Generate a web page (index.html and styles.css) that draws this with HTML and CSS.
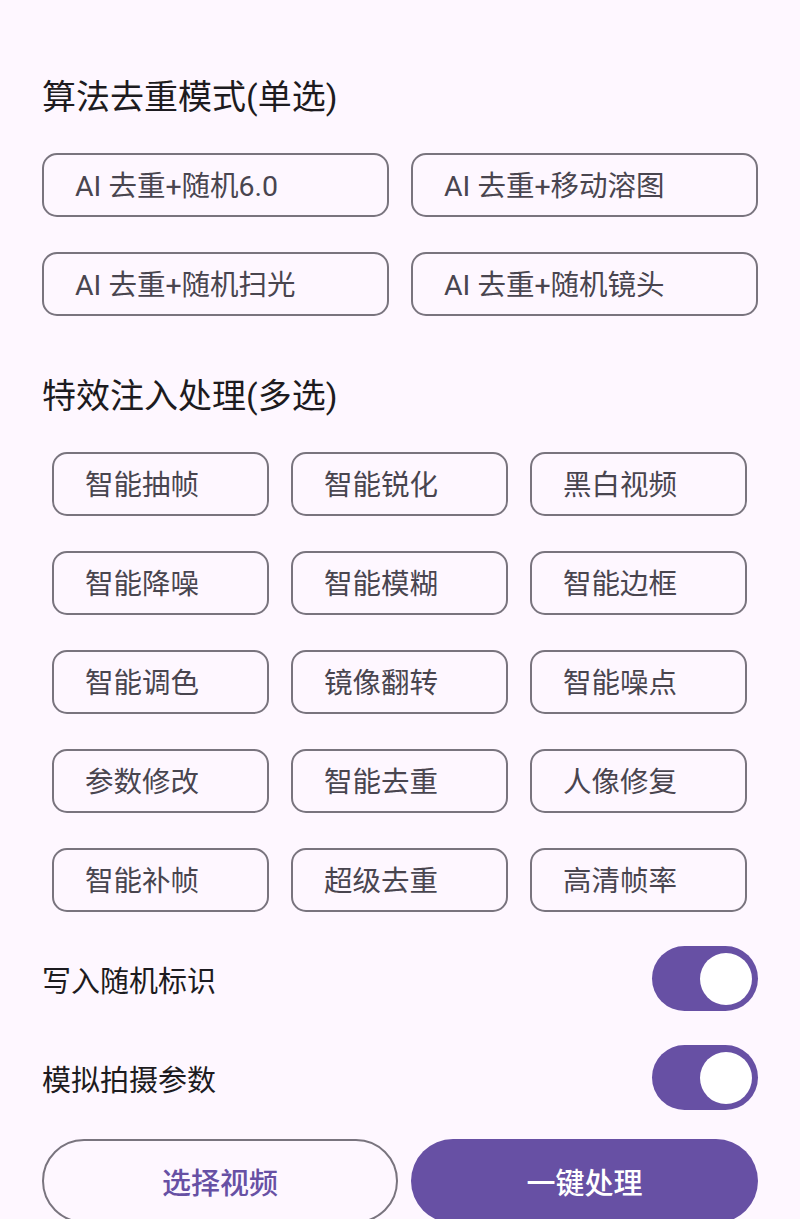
FILE: index.html
```html
<!DOCTYPE html>
<html lang="zh">
<head>
<meta charset="utf-8">
<link rel="stylesheet" href="styles.css">
</head>
<body>
<div class="page">
  <h2 class="title">算法去重模式(单选)</h2>
  <div class="modes">
    <div class="opt">AI 去重+随机6.0</div>
    <div class="opt">AI 去重+移动溶图</div>
    <div class="opt">AI 去重+随机扫光</div>
    <div class="opt">AI 去重+随机镜头</div>
  </div>
  <h2 class="title title2">特效注入处理(多选)</h2>
  <div class="effects">
    <div class="opt">智能抽帧</div>
    <div class="opt">智能锐化</div>
    <div class="opt">黑白视频</div>
    <div class="opt">智能降噪</div>
    <div class="opt">智能模糊</div>
    <div class="opt">智能边框</div>
    <div class="opt">智能调色</div>
    <div class="opt">镜像翻转</div>
    <div class="opt">智能噪点</div>
    <div class="opt">参数修改</div>
    <div class="opt">智能去重</div>
    <div class="opt">人像修复</div>
    <div class="opt">智能补帧</div>
    <div class="opt">超级去重</div>
    <div class="opt">高清帧率</div>
  </div>
  <div class="switch-row">
    <span class="label">写入随机标识</span>
    <span class="switch"><span class="thumb"></span></span>
  </div>
  <div class="switch-row">
    <span class="label">模拟拍摄参数</span>
    <span class="switch"><span class="thumb"></span></span>
  </div>
  <div class="actions">
    <button class="btn btn-outline">选择视频</button>
    <button class="btn btn-filled">一键处理</button>
  </div>
</div>
</body>
</html>
```
FILE: styles.css
```css
html, body {
  margin: 0;
  padding: 0;
  background: #fef7ff;
  height: 1219px;
  overflow: hidden;
}
body {
  font-family: Roboto, "Noto Sans CJK SC", "Noto Sans", sans-serif;
  color: #1d1b20;
}
.page {
  padding: 77px 42px 0 42px;
  display: flex;
  flex-direction: column;
}
.title {
  margin: 0;
  font-size: 34px;
  font-weight: 400;
  line-height: 40px;
  height: 40px;
  color: #1d1b20;
}
.title2 {
  margin-top: 60px;
}
.modes {
  margin-top: 36px;
  display: grid;
  grid-template-columns: 1fr 1fr;
  column-gap: 22px;
  row-gap: 35px;
}
.opt {
  box-sizing: border-box;
  height: 64px;
  border: 2px solid #79747e;
  border-radius: 15px;
  display: flex;
  align-items: center;
  padding: 0 0 3px 31px;
  font-size: 28.5px;
  color: #49454f;
  white-space: nowrap;
}
.effects {
  margin: 36px 11px 0 10px;
  display: grid;
  grid-template-columns: 1fr 1fr 1fr;
  column-gap: 22px;
  row-gap: 35px;
}
.switch-row {
  display: flex;
  align-items: center;
  justify-content: space-between;
  height: 65px;
  margin-top: 34px;
}
.label {
  font-size: 29px;
  color: #1d1b20;
}
.switch {
  width: 106px;
  height: 65px;
  border-radius: 33px;
  background: #6750a4;
  display: flex;
  align-items: center;
  justify-content: flex-end;
  padding-right: 6px;
  box-sizing: border-box;
}
.thumb {
  width: 52px;
  height: 52px;
  border-radius: 50%;
  background: #ffffff;
}
.actions {
  margin-top: 29px;
  display: grid;
  grid-template-columns: 356px 1fr;
  column-gap: 13px;
}
.btn {
  height: 84px;
  border-radius: 42px;
  font-family: Roboto, "Noto Sans CJK SC", "Noto Sans", sans-serif;
  font-size: 29px;
  font-weight: 500;
  padding: 0;
  box-sizing: border-box;
}
.btn-outline {
  background: transparent;
  border: 2px solid #79747e;
  color: #6750a4;
}
.btn-filled {
  background: #6750a4;
  border: none;
  color: #ffffff;
}
```
